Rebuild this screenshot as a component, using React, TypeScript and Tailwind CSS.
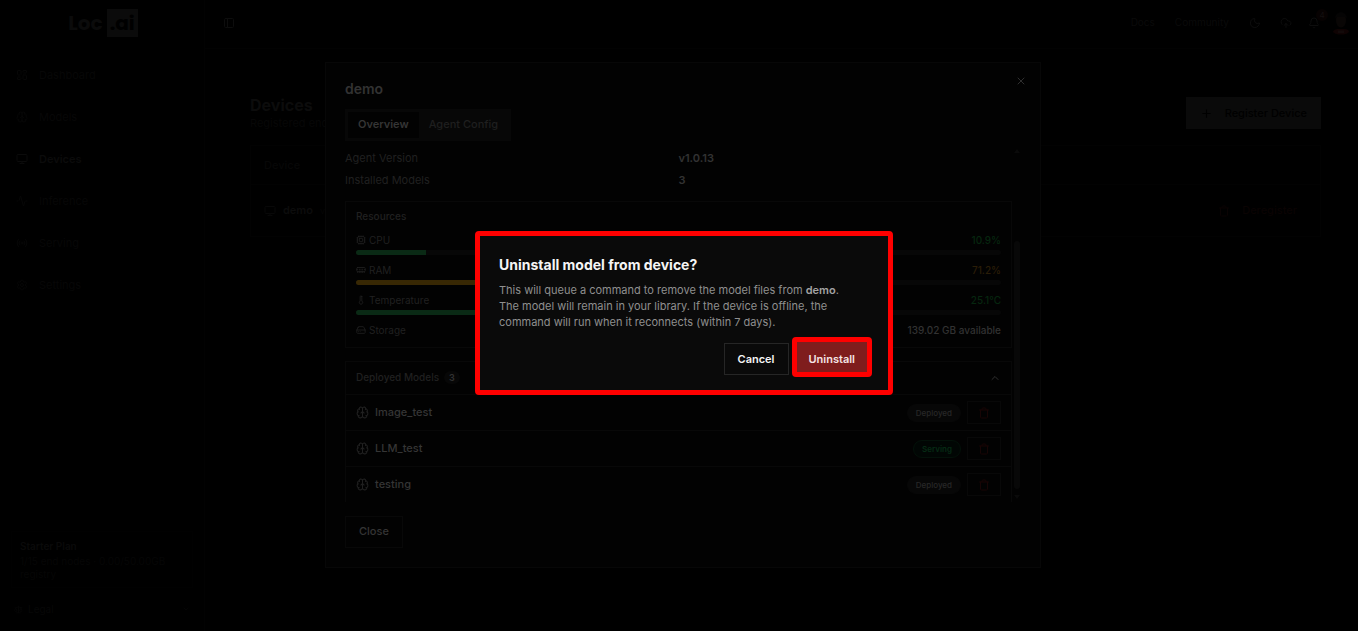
import type { ReactNode } from "react";
import {
  Activity,
  Bell,
  Brain,
  ChevronDown,
  ChevronUp,
  CloudUpload,
  Cpu,
  HardDrive,
  LayoutDashboard,
  MemoryStick,
  Monitor,
  Moon,
  PanelLeft,
  Plus,
  Radio,
  Scale,
  Settings,
  Thermometer,
  Trash,
  X,
} from "lucide-react";

const navItems = [
  { label: "Dashboard", icon: LayoutDashboard },
  { label: "Models", icon: Brain },
  { label: "Devices", icon: Monitor, active: true },
  { label: "Inference", icon: Activity },
  { label: "Serving", icon: Radio },
  { label: "Settings", icon: Settings },
];

const resources = [
  { label: "CPU", icon: Cpu, value: "10.9%", percent: 10.9, text: "text-[#06260f]", bar: "bg-[#0a2a15]" },
  { label: "RAM", icon: MemoryStick, value: "71.2%", percent: 71.2, text: "text-[#2a1d07]", bar: "bg-[#382804]" },
  { label: "Temperature", icon: Thermometer, value: "25.1°C", percent: 25.1, text: "text-[#06260f]", bar: "bg-[#0a2a15]" },
];

const models = [
  { name: "Image_test", status: "Deployed" },
  { name: "LLM_test", status: "Serving" },
  { name: "testing", status: "Deployed" },
];

function Sidebar() {
  return (
    <aside className="flex w-[205px] shrink-0 flex-col border-r border-[#020202]">
      <div className="flex items-center justify-center gap-1 pt-[9px] pl-[2px] font-['Poppins','Inter',sans-serif] text-[20px] leading-7 font-bold text-[#0b0b0b]">
        <span>Loc</span>
        <span className="bg-[#0b0b0b] px-[3px] text-black">.ai</span>
      </div>
      <nav className="mt-[22px] flex flex-col gap-[10px] px-2">
        {navItems.map(({ label, icon: Icon, active }) => (
          <a
            key={label}
            href="#"
            className={
              active
                ? "flex h-8 items-center gap-[11px] px-2 font-semibold text-[#0b0b0b]"
                : "flex h-8 items-center gap-[11px] px-2 text-[#070707]"
            }
          >
            <Icon size={12} />
            {label}
          </a>
        ))}
      </nav>
      <div className="mx-[11px] mt-auto border border-[#010101] px-2 py-[6px] text-[10px] text-[#060606]">
        <p className="leading-4 font-semibold text-[#0a0a0a]">Starter Plan</p>
        <p className="mt-px leading-[13px]">1/15 end nodes · 0.00/50.00GB registry</p>
      </div>
      <button type="button" className="mt-[13px] mb-[14px] flex items-center gap-[5px] px-[14px] text-[10px] leading-4 text-[#070707]">
        <Scale size={9} />
        Legal
        <ChevronDown size={8} className="ml-auto" />
      </button>
    </aside>
  );
}

function Header() {
  return (
    <header className="flex h-[49px] items-center border-b border-[#020202] pr-2 pb-[3px] pl-[18px] text-[#0d0d0d]">
      <button type="button" aria-label="Toggle sidebar">
        <PanelLeft size={12} />
      </button>
      <div className="ml-auto flex items-center text-[10px]">
        <a href="#" className="text-[#0a0a0a]">Docs</a>
        <a href="#" className="ml-5 text-[#0a0a0a]">Community</a>
        <button type="button" aria-label="Theme" className="ml-5">
          <Moon size={12} />
        </button>
        <button type="button" aria-label="Uploads" className="ml-[19px]">
          <CloudUpload size={12} />
        </button>
        <button type="button" aria-label="Notifications" className="relative ml-4">
          <Bell size={12} />
          <span className="absolute -top-2 left-2 flex h-3 w-3 items-center justify-center rounded-full bg-[#070202] text-[8px] text-[#141010]">4</span>
        </button>
        <svg viewBox="0 0 18 24" className="ml-3 h-6 w-[18px]" aria-hidden="true">
          <path d="M1 21c0-2 3-3 5-3h6c3 0 5 1 5 3-2 2-4 2.500-8 2.500S3 23 1 21z" fill="#0f0303" />
          <ellipse cx="9" cy="9.5" rx="5" ry="7" fill="#090605" />
          <path d="M3 8c0-9 12-9 12 0l-1-2H4z" fill="#050404" />
          <path d="M6 19.500h6v2.500H6z" fill="#120a0a" />
        </svg>
      </div>
    </header>
  );
}

function DevicesPage() {
  return (
    <main className="pt-[46px] pr-[37px] pl-[45px]">
      <div className="flex items-center justify-between">
        <div>
          <h1 className="text-[16px] leading-5 font-bold text-[#0c0c0c]">Devices</h1>
          <p className="leading-4 text-[#070707]">Registered end nodes</p>
        </div>
        <button type="button" className="flex h-8 items-center gap-3 bg-[#0a0a0a] px-[14px] font-medium text-black">
          <Plus size={13} />
          Register Device
        </button>
      </div>
      <table className="mt-[14px] w-full border border-[#020202] text-left">
        <thead>
          <tr className="h-[39px] border-b border-[#020202] text-[#070707]">
            <th className="pl-[13px] font-medium">Device</th>
            <th />
          </tr>
        </thead>
        <tbody>
          <tr className="h-[52px]">
            <td className="pl-[13px]">
              <span className="flex items-center gap-[7px] font-semibold text-[#0c0c0c]">
                <Monitor size={12} className="text-[#080808]" />
                demo
                <span className="text-[9px] font-normal text-[#060606]">v1.0.13</span>
              </span>
            </td>
            <td className="pr-[23px]">
              <button type="button" className="ml-auto flex items-center gap-3 font-medium text-[#0a0303]">
                <Trash size={12} />
                Deregister
              </button>
            </td>
          </tr>
        </tbody>
      </table>
    </main>
  );
}

function StatusBadge({ status }: { status: string }) {
  return status === "Serving" ? (
    <span className="rounded-full border border-[#031109] bg-[#010604] px-2 text-[8px] leading-4 font-semibold text-[#062b14]">{status}</span>
  ) : (
    <span className="rounded-full border border-[#070707] bg-[#070707] px-2 text-[8px] leading-4 font-medium text-[#282828]">{status}</span>
  );
}

function DetailRow({ label, children }: { label: string; children: ReactNode }) {
  return (
    <div className="grid grid-cols-2 leading-4">
      <dt className="text-[#202020]">{label}</dt>
      <dd className="font-semibold text-[#323232]">{children}</dd>
    </div>
  );
}

function DeviceDialog() {
  return (
    <div role="dialog" aria-label="demo" className="relative flex w-[716px] flex-col border border-[#070707] bg-[#020202] px-[19px] pt-4 pb-[19px]">
      <h2 className="text-[14px] leading-5 font-semibold text-[#323232]">demo</h2>
      <button type="button" aria-label="Close dialog" className="absolute top-3 right-[13px] text-[#303030]">
        <X size={12} />
      </button>
      <div role="tablist" className="mt-[10px] flex h-8 self-start bg-[#070707] p-[3px] font-semibold">
        <button type="button" role="tab" aria-selected="true" className="bg-[#020202] px-[10px] text-[#353535]">
          Overview
        </button>
        <button type="button" role="tab" aria-selected="false" className="px-[10px] font-medium text-[#1f1f1f]">
          Agent Config
        </button>
      </div>
      <div className="mt-[7px] flex h-[354px] overflow-hidden">
        <div className="min-w-0 flex-1">
          <dl className="space-y-[6px] pt-[2px]">
            <DetailRow label="Agent Version">v1.0.13</DetailRow>
            <DetailRow label="Installed Models">3</DetailRow>
          </dl>
          <section className="mt-[13px] h-[147px] border border-[#080808] px-[10px] pt-[6px] text-[10px]">
            <h3 className="leading-4 font-medium text-[#202020]">Resources</h3>
            <div className="mt-[9px] space-y-2">
              {resources.map(({ label, icon: Icon, value, percent, text, bar }) => (
                <div key={label}>
                  <div className="flex items-center gap-[3px] leading-[14px] text-[#202020]">
                    <Icon size={10} />
                    {label}
                    <span className={`${text} ml-auto font-medium`}>{value}</span>
                  </div>
                  <div className="mt-[3px] h-[5px] overflow-hidden rounded-full bg-[#070707]">
                    <div className={`${bar} h-full`} style={{ width: `${percent}%` }} />
                  </div>
                </div>
              ))}
              <div className="flex items-center gap-[3px] leading-[14px] text-[#202020]">
                <HardDrive size={10} />
                Storage
                <span className="ml-auto font-medium text-[#323232]">139.02 GB available</span>
              </div>
            </div>
          </section>
          <section className="mt-[13px] border border-[#080808]">
            <button type="button" className="flex h-8 w-full items-center px-[10px] text-[10px] font-medium text-[#202020]">
              Deployed Models
              <span className="ml-[5px] rounded-full bg-[#070707] px-[5px] text-[9px] leading-[13px] font-semibold text-[#323232]">3</span>
              <ChevronUp size={12} className="ml-auto text-[#303030]" />
            </button>
            <ul>
              {models.map((model) => (
                <li key={model.name} className="flex h-9 items-center border-t border-[#080808] px-[10px] pt-px">
                  <Brain size={13} className="text-[#202020]" />
                  <span className="ml-[6px] font-medium text-[#353535]">{model.name}</span>
                  <span className="ml-auto flex items-center gap-[6px]">
                    <StatusBadge status={model.status} />
                    <button type="button" aria-label={`Uninstall ${model.name}`} className="flex h-[23px] w-[34px] items-center justify-center border border-[#080808] text-[#180505]">
                      <Trash size={12} />
                    </button>
                  </span>
                </li>
              ))}
            </ul>
          </section>
        </div>
        <div className="flex w-[9px] flex-col items-center pt-px pb-[3px]" aria-hidden="true">
          <svg viewBox="0 0 6 4" className="h-1 w-[6px] fill-[#0a0a0a]">
            <path d="M3 0l3 4H0z" />
          </svg>
          <div className="mt-[88px] w-[6px] flex-1 rounded-full bg-[#080808]" />
          <svg viewBox="0 0 6 4" className="mt-[6px] h-1 w-[6px] fill-[#0a0a0a]">
            <path d="M0 0h6L3 4z" />
          </svg>
        </div>
      </div>
      <button type="button" className="mt-[14px] h-8 self-start border border-[#080808] px-[13px] font-medium text-[#353535]">
        Close
      </button>
    </div>
  );
}

function UninstallDialog() {
  return (
    <div role="alertdialog" aria-labelledby="uninstall-title" className="w-[418px] rounded-sm border-[5px] border-[#ff0000] bg-[#0a0a0a] px-[19px] pt-[19px] pb-[13px]">
      <h2 id="uninstall-title" className="text-[14px] leading-5 font-bold text-[#f5f5f5]">
        Uninstall model from device?
      </h2>
      <p className="mt-[7px] pr-4 leading-4 text-[#8f8f8f]">
        This will queue a command to remove the model files from <strong className="font-semibold text-[#a3a3a3]">demo</strong>. The model will remain in your library. If the device is offline, the command will run when it reconnects (within 7 days).
      </p>
      <div className="-mr-[3px] mt-[7px] flex items-end justify-end gap-[3px] font-semibold">
        <button type="button" className="mb-[2px] h-8 border border-[#262626] px-[13px] text-[#f5f5f5]">
          Cancel
        </button>
        <button type="button" className="h-10 rounded-sm border-[5px] border-[#ff0000] bg-[#7f1d1d] px-3 pt-1 text-[#f5e5e5]">
          Uninstall
        </button>
      </div>
    </div>
  );
}

export default function App() {
  return (
    <div className="flex min-h-screen bg-black font-['Inter',sans-serif] text-[11px]">
      <Sidebar />
      <div className="min-w-0 flex-1">
        <Header />
        <DevicesPage />
      </div>
      <div className="fixed inset-0 flex items-center justify-center pb-[2px] pl-2">
        <DeviceDialog />
      </div>
      <div className="fixed inset-0 flex items-center justify-center pb-[5px] pl-[10px]">
        <UninstallDialog />
      </div>
    </div>
  );
}
